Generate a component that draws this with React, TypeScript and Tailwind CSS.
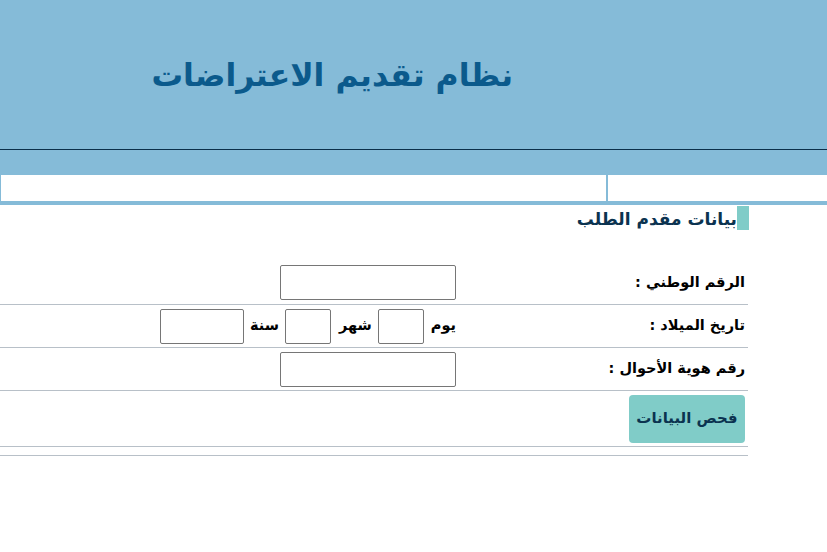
export default function App() {
  const font = { fontFamily: '"DejaVu Sans", "Noto Sans", sans-serif' };

  return (
    <div dir="rtl" className="w-[827px] h-[552px] bg-white overflow-hidden" style={font}>
      {/* Header */}
      <div className="h-[150px] bg-[#85bbd8] border-b border-[#0b2f4a] flex items-center pr-[314px]">
        <h1 className="text-[31.5px] font-bold text-[#0b5a8c] leading-none mt-[2px]">نظام تقديم الاعتراضات</h1>
      </div>
      <div className="h-[25px] bg-[#85bbd8]" />

      {/* empty bar row */}
      <div className="bg-[#85bbd8] flex gap-[2px] pl-[1px] pb-[4px]">
        <div className="w-[219px] h-[26px] bg-white" />
        <div className="flex-1 h-[26px] bg-white" />
      </div>

      {/* Section title */}
      <div className="w-[300px] mr-[78px] flex items-center mt-[1px]">
        <div className="w-[12px] h-[24px] bg-[#80ccc8]" />
        <h2 className="text-[17px] font-bold text-[#0b3350] leading-none mt-[2px]">بيانات مقدم الطلب</h2>
      </div>

      {/* Form */}
      <div className="w-[748px] mr-[79px] mt-[31px] text-[14.5px] font-bold text-black">
        <div className="flex items-center h-[44px] border-b border-[#b8c0c8]">
          <div className="w-[288px] pr-[3px]">الرقم الوطني :</div>
          <div className="pr-[4px]">
            <input className="w-[176px] h-[35px] border border-[#767676] rounded-[2px]" />
          </div>
        </div>
        <div className="flex items-center h-[43px] border-b border-[#b8c0c8]">
          <div className="w-[288px] pr-[3px]">تاريخ الميلاد :</div>
          <div className="pr-[4px] flex items-center">
            <span>يوم</span>
            <input className="mr-[7px] w-[46px] h-[35px] border border-[#767676] rounded-[2px]" />
            <span className="mr-[6px]">شهر</span>
            <input className="mr-[8px] w-[46px] h-[35px] border border-[#767676] rounded-[2px]" />
            <span className="mr-[6px]">سنة</span>
            <input className="mr-[6px] w-[84px] h-[35px] border border-[#767676] rounded-[2px]" />
          </div>
        </div>
        <div className="flex items-center h-[43px] border-b border-[#b8c0c8]">
          <div className="w-[288px] pr-[3px]">رقم هوية الأحوال :</div>
          <div className="pr-[4px]">
            <input className="w-[176px] h-[35px] border border-[#767676] rounded-[2px]" />
          </div>
        </div>
        <div className="flex items-center h-[56px] border-b border-[#b8c0c8]">
          <div className="pr-[3px]">
            <button className="w-[116px] h-[48px] rounded-[4px] bg-[#80ccc8] text-[#0b3350] text-[15px] font-bold">
              فحص البيانات
            </button>
          </div>
        </div>
        <div className="h-[9px] border-b border-[#b8c0c8]" />
      </div>
    </div>
  );
}
